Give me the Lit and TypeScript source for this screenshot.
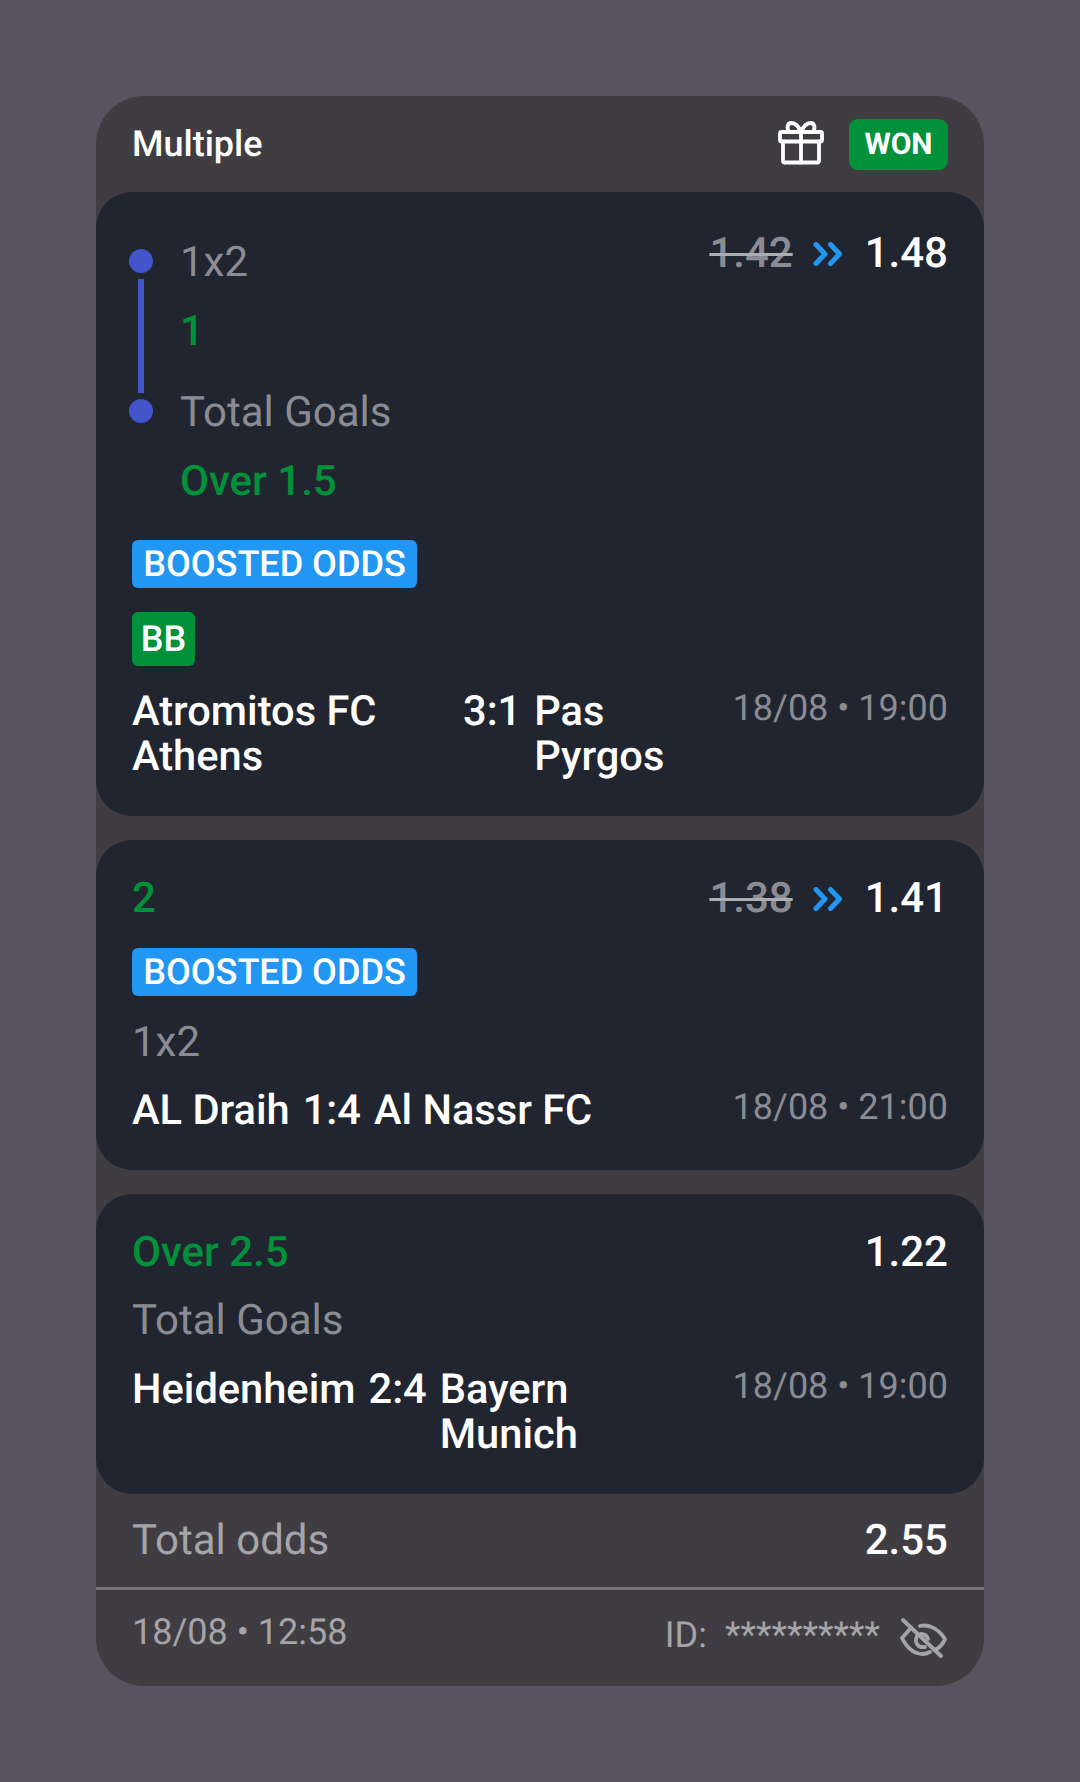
import { LitElement, html, css, nothing } from "lit";
import { customElement } from "lit/decorators.js";

const chevrons = html`<svg class="chev" viewBox="0 0 30 24" fill="none" stroke="#2196f3" stroke-width="5" stroke-linejoin="round" stroke-linecap="round"><path d="M3 2.500 12 12 3 21.500"/><path d="M17.500 2.500 26.500 12 17.500 21.500"/></svg>`;

const gift = html`<svg class="gift" viewBox="7 7 48 46" fill="none" stroke="#fff" stroke-width="3.800" stroke-linejoin="round" stroke-linecap="round"><rect x="10" y="18" width="42" height="9.500" rx="1.500"/><path d="M13 27.500V47a1.500 1.500 0 0 0 1.500 1.500h33A1.500 1.500 0 0 0 49 47V27.500"/><path d="M31 18v30.500"/><path d="M31 18C28.500 12 24.500 9 21.500 9 17.500 9 16 14 19.500 18"/><path d="M31 18C33.500 12 37.500 9 40.500 9 44.500 9 46 14 42.500 18"/></svg>`;

const eye = html`<svg class="eye" viewBox="7 7 48 46" fill="none" stroke="#a5a5a8" stroke-width="3.800" stroke-linecap="round" stroke-linejoin="round"><path d="M17 19 9 28C13 36 20 44 30 44 33 44 35 43 37 42"/><path d="M27 16C35 14 45 18 52 29 50 34 46 38 42 40"/><path d="M24 26C21 33 25 38 32 37"/><path d="M28 24C31 24 34 26 35 29"/><path d="M10 10 48 46"/></svg>`;

interface Bet {
  oldOdds?: string;
  odds: string;
  home: unknown;
  score: string;
  away: unknown;
  date: string;
}

@customElement("app-root")
export class AppRoot extends LitElement {
  static styles = css`
    :host {
      display: block;
      background: #57545f;
      min-height: 1782px;
      padding: 96px;
      box-sizing: border-box;
      font-family: Roboto, "Liberation Sans", sans-serif;
      text-rendering: geometricPrecision;
    }
    .ticket {
      background: #403d42;
      border-radius: 48px;
      overflow: hidden;
      height: 1590px;
    }
    .head {
      height: 96px;
      box-sizing: border-box;
      padding: 0 36px;
      display: flex;
      align-items: center;
      justify-content: space-between;
    }
    .title {
      font-size: 36px;
      font-weight: 500;
      color: #fff;
    }
    .head-right {
      display: flex;
      align-items: center;
      gap: 24px;
    }
    .gift {
      width: 48px;
      height: 46px;
      display: block;
    }
    .won {
      width: 99px;
      height: 51px;
      border-radius: 9px;
      background: #00913a;
      color: #fff;
      font-size: 30px;
      font-weight: 700;
      display: flex;
      align-items: center;
      justify-content: center;
    }
    .card {
      background: #212530;
      border-radius: 36px;
      padding: 36px;
      margin-bottom: 24px;
      box-sizing: border-box;
    }
    .card.first {
      height: 624px;
      padding-top: 37px;
    }
    .card.second {
      height: 330px;
      padding-top: 34px;
    }
    .card.third {
      height: 300px;
      padding-top: 34px;
      margin-bottom: 0;
    }
    .row {
      display: flex;
      justify-content: space-between;
      align-items: flex-start;
    }
    .legs {
      display: flex;
      gap: 27px;
    }
    .rail {
      width: 24px;
      margin-left: -3px;
      padding-top: 20px;
      display: flex;
      flex-direction: column;
      align-items: center;
      gap: 6px;
    }
    .dot {
      width: 24px;
      height: 24px;
      border-radius: 50%;
      background: #4355c8;
    }
    .bar {
      width: 6px;
      height: 114px;
      background: #4355c8;
    }
    .leg-text {
      padding-top: 9px;
    }
    .gray {
      color: #8b8c93;
      font-size: 42px;
      line-height: 49px;
    }
    .pick {
      color: #00913a;
      font-size: 42px;
      line-height: 49px;
      font-weight: 500;
    }
    .leg-a {
      padding-bottom: 20px;
    }
    .leg-b {
      padding-bottom: 32px;
    }
    .odds {
      display: flex;
      align-items: center;
      font-size: 42px;
      line-height: 49px;
      font-weight: 500;
      color: #fff;
    }
    .old {
      color: #8b8c93;
      text-decoration: line-through;
      text-decoration-color: #a9aeb2;
      text-decoration-thickness: 3px;
    }
    .chev {
      width: 30px;
      height: 24px;
      margin: 0 22px 0 20px;
      display: block;
    }
    .boost {
      display: flex;
      align-items: center;
      justify-content: center;
      width: 285px;
      height: 48px;
      border-radius: 6px;
      background: #2196f3;
      color: #fff;
      font-size: 36px;
      font-weight: 500;
    }
    .bb {
      display: flex;
      align-items: center;
      justify-content: center;
      width: 63px;
      height: 54px;
      border-radius: 6px;
      background: #00913a;
      color: #fff;
      font-size: 36px;
      font-weight: 500;
    }
    .first .boost { margin-top: 34px; }
    .first .bb { margin-top: 24px; }
    .second .boost { margin-top: 25px; }
    .match {
      display: flex;
      justify-content: space-between;
      align-items: flex-start;
    }
    .first .match { margin-top: 23px; }
    .second .match { margin-top: 21px; }
    .third .match { margin-top: 22px; }
    .second .market { margin-top: 22px; }
    .third .market { margin-top: 19px; }
    .teams {
      display: flex;
      gap: 13px;
      color: #fff;
      font-size: 41.6px;
      line-height: 45px;
      font-weight: 500;
    }
    .home.wide { width: 318px; }
    .date {
      color: #8b8c93;
      font-size: 36px;
      line-height: 45px;
      margin-top: -3px;
    }
    .total {
      height: 93px;
      box-sizing: border-box;
      padding: 0 36px;
      display: flex;
      justify-content: space-between;
      align-items: center;
    }
    .total .label {
      color: #a5a5a8;
      font-size: 42px;
    }
    .total .value {
      color: #fff;
      font-size: 42px;
      font-weight: 500;
    }
    .foot {
      border-top: 3px solid #76747a;
      padding: 20px 36px 0;
      display: flex;
      justify-content: space-between;
      align-items: flex-start;
    }
    .foot .date {
      color: #a5a5a8;
      margin-top: 0;
    }
    .id {
      display: flex;
      align-items: flex-start;
      color: #a5a5a8;
      font-size: 36px;
      line-height: 45px;
      padding-top: 3px;
    }
    .stars {
      margin-left: 18px;
    }
    .eye {
      width: 48px;
      height: 46px;
      margin: 4px 0 0 20px;
      display: block;
    }
  `;

  private match(b: Bet, wide = false) {
    return html`<div class="match">
      <div class="teams">
        <div class="home ${wide ? "wide" : ""}">${b.home}</div>
        <div class="score">${b.score}</div>
        <div class="away">${b.away}</div>
      </div>
      <div class="date">${b.date}</div>
    </div>`;
  }

  private odds(b: Bet) {
    return html`<div class="odds">
      ${b.oldOdds ? html`<span class="old">${b.oldOdds}</span>${chevrons}` : nothing}
      <span>${b.odds}</span>
    </div>`;
  }

  render() {
    const a: Bet = { oldOdds: "1.42", odds: "1.48", home: html`Atromitos FC<br />Athens`, score: "3:1", away: html`Pas<br />Pyrgos`, date: "18/08 • 19:00" };
    const b: Bet = { oldOdds: "1.38", odds: "1.41", home: "AL Draih", score: "1:4", away: "Al Nassr FC", date: "18/08 • 21:00" };
    const c: Bet = { odds: "1.22", home: "Heidenheim", score: "2:4", away: html`Bayern<br />Munich`, date: "18/08 • 19:00" };
    return html`<div class="ticket">
      <div class="head">
        <div class="title">Multiple</div>
        <div class="head-right">${gift}<div class="won">WON</div></div>
      </div>
      <div class="card first">
        <div class="row">
          <div class="legs">
            <div class="rail">
              <div class="dot"></div>
              <div class="bar"></div>
              <div class="dot"></div>
            </div>
            <div class="leg-text">
              <div class="gray leg-a">1x2</div>
              <div class="pick leg-b">1</div>
              <div class="gray leg-a">Total Goals</div>
              <div class="pick">Over 1.5</div>
            </div>
          </div>
          ${this.odds(a)}
        </div>
        <div class="boost">BOOSTED ODDS</div>
        <div class="bb">BB</div>
        ${this.match(a, true)}
      </div>
      <div class="card second">
        <div class="row"><div class="pick">2</div>${this.odds(b)}</div>
        <div class="boost">BOOSTED ODDS</div>
        <div class="gray market">1x2</div>
        ${this.match(b)}
      </div>
      <div class="card third">
        <div class="row"><div class="pick">Over 2.5</div>${this.odds(c)}</div>
        <div class="gray market">Total Goals</div>
        ${this.match(c)}
      </div>
      <div class="total"><div class="label">Total odds</div><div class="value">2.55</div></div>
      <div class="foot">
        <div class="date">18/08 • 12:58</div>
        <div class="id"><span>ID:</span><span class="stars">**********</span>${eye}</div>
      </div>
    </div>`;
  }
}
